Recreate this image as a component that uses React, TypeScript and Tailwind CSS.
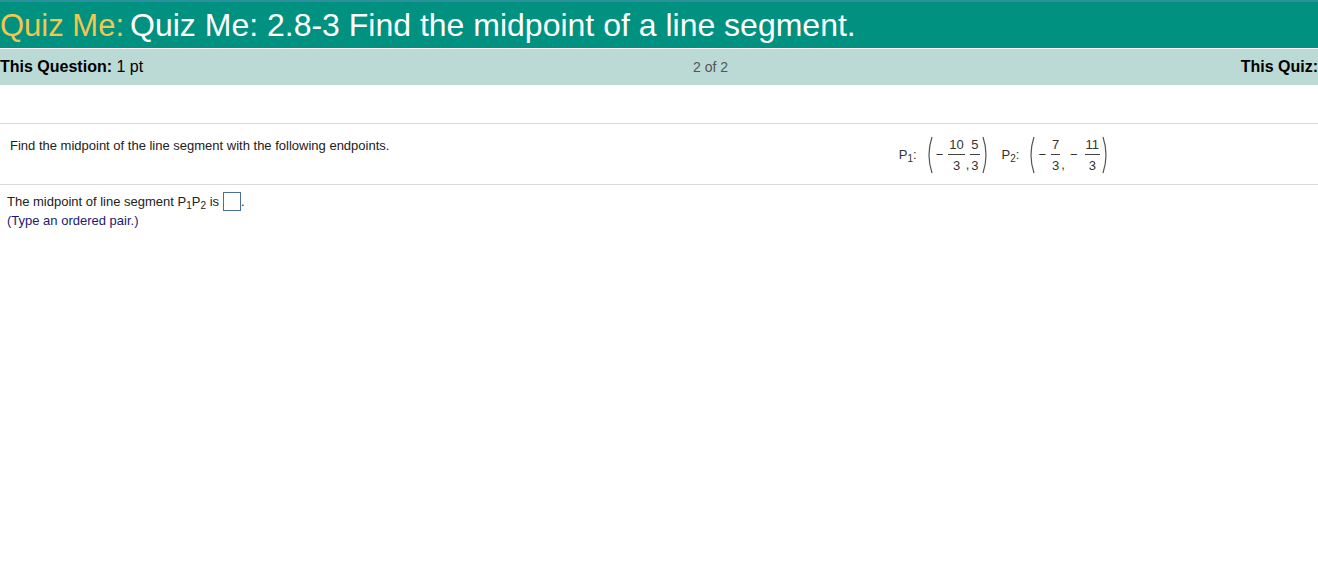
import React from 'react';

function Frac({ num, den }: { num: string; den: string }) {
  return (
    <span className="inline-flex flex-col items-center leading-none mx-[1px]">
      <span className="px-[1px] pb-[3px]">{num}</span>
      <span className="self-stretch h-px bg-[#444]" />
      <span className="px-[1px] pt-[4px]">{den}</span>
    </span>
  );
}

function ParenSvg({ right }: { right?: boolean }) {
  return (
    <svg width="9" height="38" viewBox="0 0 9 38" className="shrink-0">
      <path
        d={right ? 'M2 1 Q8 19 2 37' : 'M7 1 Q1 19 7 37'}
        fill="none"
        stroke="#555"
        strokeWidth="1.2"
      />
    </svg>
  );
}

function Paren({ children }: { children: React.ReactNode }) {
  return (
    <span className="inline-flex items-center">
      <ParenSvg />
      {children}
      <ParenSvg right />
    </span>
  );
}

export default function App() {
  return (
    <div className="w-[1318px] h-[572px] bg-white font-['Liberation_Sans',Arial,sans-serif] text-[#222] overflow-hidden">
      <div className="h-[48px] bg-[#009180] border-t-2 border-[#2b8f9c] flex items-center whitespace-nowrap">
        <span className="text-[31px] leading-none text-[#f2c74f]">Quiz Me:</span>
        <span className="text-[32px] leading-none text-white ml-[6px]">Quiz Me: 2.8-3 Find the midpoint of a line segment.</span>
      </div>
      <div className="h-px bg-white" />
      <div className="h-[36px] bg-[#bbd9d5] flex items-center text-[16px] text-black whitespace-nowrap">
        <div className="w-[693px]">
          <span className="font-bold">This Question:</span> 1 pt
        </div>
        <div className="text-[14px] text-[#555]">2 of 2</div>
        <div className="font-bold ml-auto">This Quiz:</div>
      </div>
      <div className="h-[38px]" />
      <div className="border-t border-[#d9d9d9] h-[61px] flex justify-between text-[13px]">
        <div className="pl-[10px] pt-[12px]">Find the midpoint of the line segment with the following endpoints.</div>
        <div className="flex items-center pr-[208px] pt-[2px] text-[#333]">
          <span className="mr-[8px]">
            P<sub className="text-[10px]">1</sub>:
          </span>
          <Paren>
            <span className="ml-[2px] mr-[4px]">−</span>
            <Frac num="10" den="3" />
            <span className="self-end">,</span>
            <Frac num="5" den="3" />
          </Paren>
          <span className="ml-[12px] mr-[8px]">
            P<sub className="text-[10px]">2</sub>:
          </span>
          <Paren>
            <span className="ml-[2px] mr-[4px]">−</span>
            <Frac num="7" den="3" />
            <span className="self-end">,</span>
            <span className="ml-[5px] mr-[6px]">−</span>
            <Frac num="11" den="3" />
          </Paren>
        </div>
      </div>
      <div className="border-t border-[#d9d9d9] pl-[7px] pt-[7px] text-[13px]">
        <div className="flex items-center leading-[19px]">
          <span>
            The midpoint of line segment P<sub className="text-[10px]">1</sub>P<sub className="text-[10px]">2</sub> is
          </span>
          <span className="inline-block w-[18px] h-[19px] border border-[#4a6f9a] ml-[4px]" />
          <span>.</span>
        </div>
        <div className="text-[#1a1a70] leading-[19px]">(Type an ordered pair.)</div>
      </div>
    </div>
  );
}
